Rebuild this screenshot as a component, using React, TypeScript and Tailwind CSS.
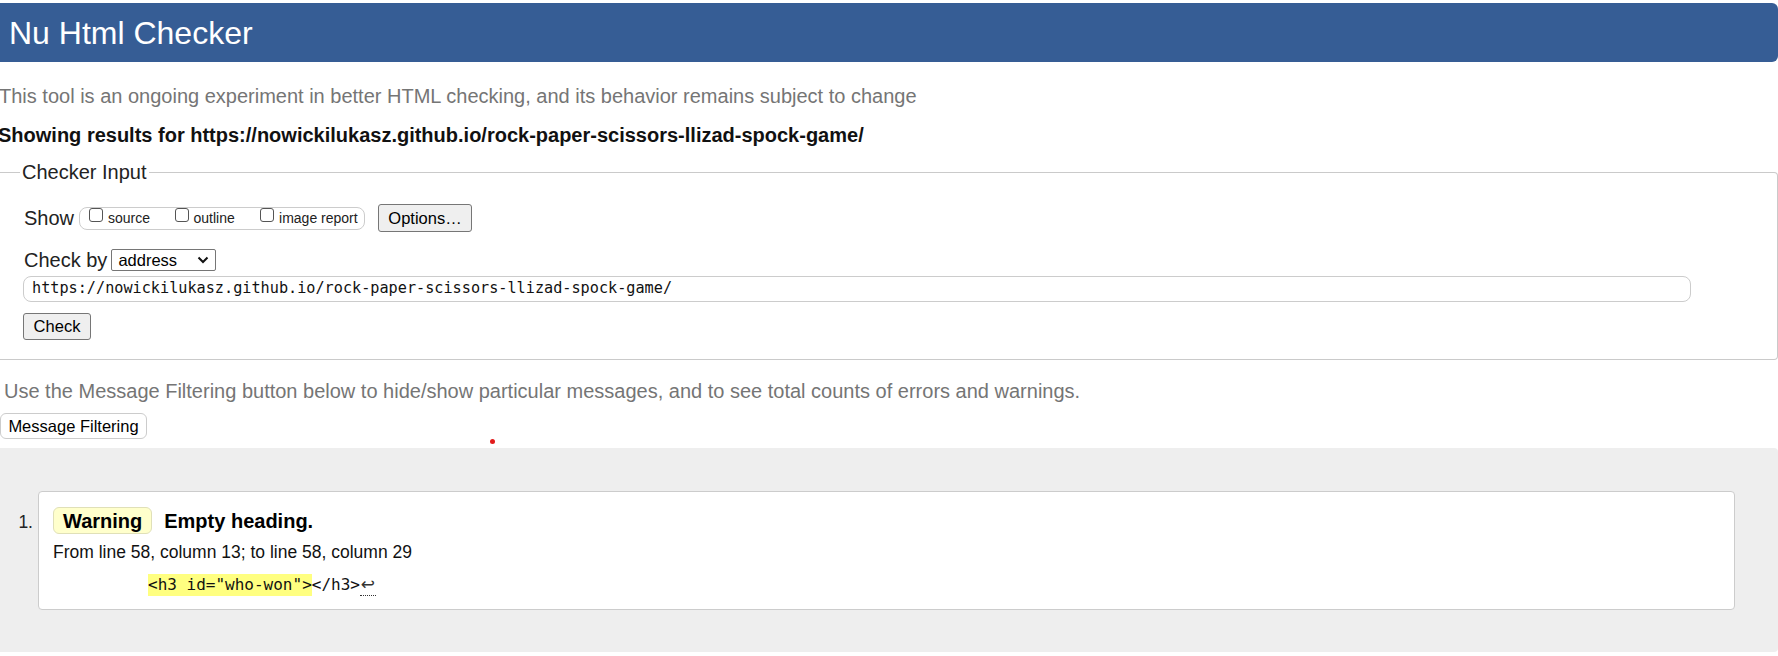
export default function App() {
  return (
    <div className="w-[1778px] h-[656px] overflow-hidden bg-white text-[#222] font-['Liberation_Sans',Arial,sans-serif]">
      {/* header */}
      <div className="mt-[3px] h-[59px] bg-[#365d95] rounded-r-[6px] flex items-center pl-[9px]">
        <h1 className="text-[32px] leading-none font-normal text-white">Nu Html Checker</h1>
      </div>

      <p className="mt-[22px] -ml-px text-[20px] leading-[24px] text-[#757575]">
        This tool is an ongoing experiment in better HTML checking, and its behavior remains subject to change
      </p>
      <p className="mt-[15px] -ml-[2px] text-[20px] leading-[24px] font-bold text-[#111]">
        Showing results for https://nowickilukasz.github.io/rock-paper-scissors-llizad-spock-game/
      </p>

      {/* checker input */}
      <fieldset className="mt-[13px] border border-l-0 border-[#cacaca] rounded-r-[4px] pl-[24px] pb-[19px]">
        <legend className="-ml-[4px] px-[2px] text-[20px] leading-[24px] text-[#222]">Checker Input</legend>

        <div className="mt-[20px] flex items-center h-[28px]">
          <span className="text-[20px] leading-[24px]">Show</span>
          <div className="ml-[5px] w-[286px] h-[23px] border border-[#cccccc] rounded-[8px] flex pl-[9px]">
            {["source", "outline", "image report"].map((label) => (
              <label key={label} className="w-[85.5px] flex shrink-0 whitespace-nowrap">
                <span className="w-[14px] h-[14px] border border-[#555] rounded-[3px] bg-white shrink-0" />
                <span className="ml-[5px] text-[14px] leading-[21px] text-[#222]">{label}</span>
              </label>
            ))}
          </div>
          <button className="ml-[13px] w-[94px] h-[28px] bg-[#efefef] border border-[#767676] rounded-[3px] text-[16.5px] leading-none text-black">
            Options…
          </button>
        </div>

        <div className="mt-[17px] flex items-center h-[22px]">
          <span className="text-[20px] leading-[24px]">Check by</span>
          <div className="ml-[4px] w-[105px] h-[22px] border border-[#767676] rounded-[2px] flex items-center justify-between pl-[6px] pr-[6px]">
            <span className="text-[16.5px] leading-none text-black">address</span>
            <svg width="12" height="8" viewBox="0 0 12 8" fill="none">
              <path d="M1.5 1.5 L6 6 L10.5 1.5" stroke="#111" strokeWidth="2" />
            </svg>
          </div>
        </div>

        <div className="mt-[5px] -ml-px w-[1668px] h-[26px] border border-[#cccccc] rounded-[8px] flex items-center pl-[8px]">
          <span className="text-[15.2px] leading-none text-[#111] font-['DejaVu_Sans_Mono',monospace]">
            https://nowickilukasz.github.io/rock-paper-scissors-llizad-spock-game/
          </span>
        </div>

        <button className="mt-[11px] -ml-px w-[68px] h-[27px] bg-[#efefef] border border-[#767676] rounded-[3px] text-[16.5px] leading-none text-black">
          Check
        </button>
      </fieldset>

      <p className="mt-[19px] ml-[4px] text-[20px] leading-[24px] text-[#757575]">
        Use the Message Filtering button below to hide/show particular messages, and to see total counts of errors and warnings.
      </p>

      <div className="relative mt-[10px] h-[26px]">
        <button className="w-[147px] h-[26px] bg-white border border-[#cccccc] rounded-[6px] text-[16.5px] leading-none text-black">
          Message Filtering
        </button>
        <span className="absolute left-[490px] top-[26px] w-[5px] h-[5px] rounded-full bg-[#e21b1b]" />
      </div>

      {/* results */}
      <div className="mt-[9px] h-[204px] bg-[#eeeeee] rounded-r-[4px] pt-[43px]">
        <ol className="flex">
          <li className="contents">
            <span className="w-[38px] shrink-0 text-right pr-[5px] pt-[20px] text-[17.5px] leading-[22px]">1.</span>
            <div className="w-[1697px] h-[119px] bg-white border border-[#cccccc] rounded-[4px] pl-[14px] pt-[15px]">
              <div className="flex items-center">
                <span className="h-[27px] px-[9px] flex items-center bg-[#ffffcc] border border-[#e0e0b8] rounded-[6px] text-[20px] font-bold leading-none text-black">
                  Warning
                </span>
                <span className="ml-[12px] text-[20px] font-bold leading-none text-black">Empty heading.</span>
              </div>
              <p className="mt-[7px] text-[17.5px] leading-[22px] text-[#111]">
                From line 58, column 13; to line 58, column 29
              </p>
              <p className="mt-[11px] ml-[95px] flex items-end text-[16px] leading-[22px] text-[#111] font-['DejaVu_Sans_Mono',monospace] whitespace-pre">
                <span className="bg-[#ffff80]">{'<h3 id="who-won">'}</span>
                <span>{"</h3>"}</span>
                <span className="h-[22px] w-[16px] flex items-center justify-center border-b border-dotted border-[#333] text-[17px] leading-none text-[#333] font-['DejaVu_Sans',sans-serif]">
                  ↩
                </span>
              </p>
            </div>
          </li>
        </ol>
      </div>
    </div>
  );
}
